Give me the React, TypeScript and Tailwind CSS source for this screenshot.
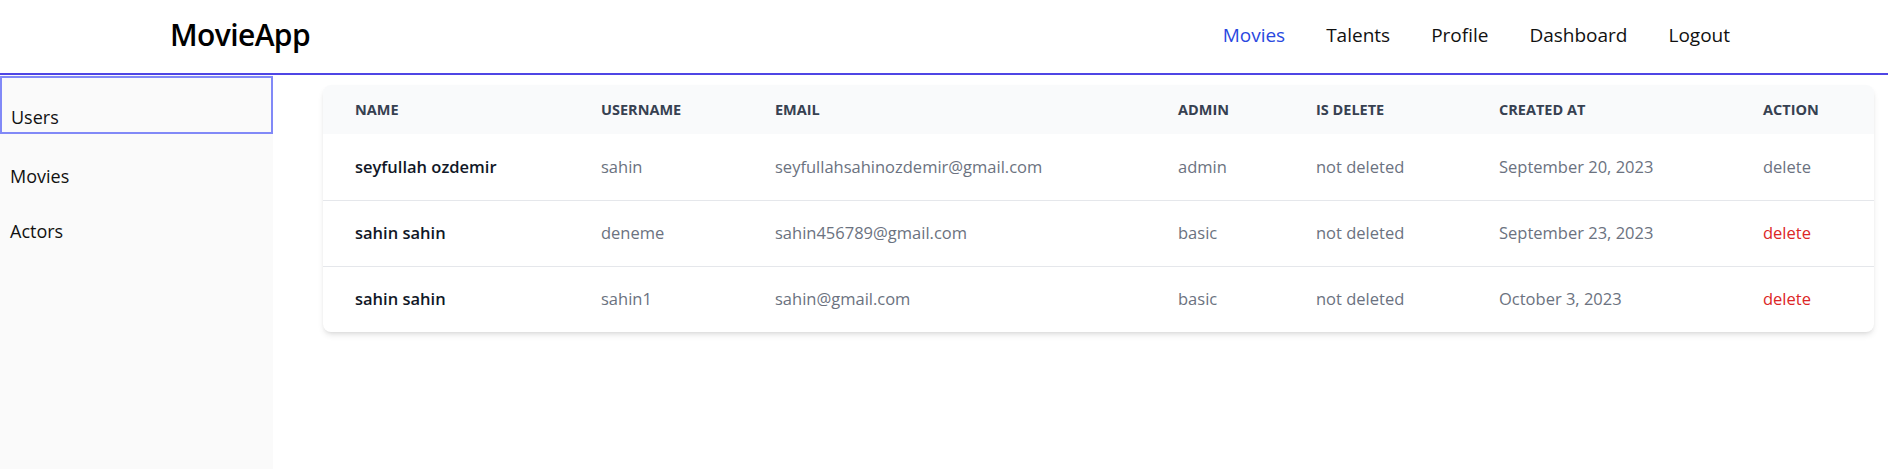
import React from "react";

const rows = [
  {
    name: "seyfullah ozdemir",
    username: "sahin",
    email: "seyfullahsahinozdemir@gmail.com",
    admin: "admin",
    deleted: "not deleted",
    created: "September 20, 2023",
    self: true,
  },
  {
    name: "sahin sahin",
    username: "deneme",
    email: "sahin456789@gmail.com",
    admin: "basic",
    deleted: "not deleted",
    created: "September 23, 2023",
    self: false,
  },
  {
    name: "sahin sahin",
    username: "sahin1",
    email: "sahin@gmail.com",
    admin: "basic",
    deleted: "not deleted",
    created: "October 3, 2023",
    self: false,
  },
];

const cols = "grid grid-cols-[246px_174px_403px_138px_183px_264px_1fr]";

export default function App() {
  return (
    <div
      className="min-h-[469px] bg-white text-black"
      style={{ fontFamily: '"Open Sans", "Noto Sans", sans-serif' }}
    >
      <header className="flex h-[75px] items-center justify-between border-b-2 border-[#4f46e5] pb-[3px] pl-[170px] pr-[158px]">
        <div className="text-[30px] font-semibold leading-none tracking-[-0.6px]">MovieApp</div>
        <nav className="flex items-center gap-[41px] text-[19px] font-medium leading-7">
          <a className="text-[#2948e0]">Movies</a>
          <a className="text-[#111111]">Talents</a>
          <a className="text-[#111111]">Profile</a>
          <a className="text-[#111111]">Dashboard</a>
          <a className="text-[#111111]">Logout</a>
        </nav>
      </header>
      <div className="flex min-h-[394px]">
        <aside className="w-[273px] shrink-0 bg-[#fafafa] text-lg leading-7 text-[#111111]">
          <div className="mt-px h-[58px] border-2 border-[#8189f7] pl-[9px] pt-[25px]">Users</div>
          <div className="mt-[14px] py-[14px] pl-[10px]">Movies</div>
          <div className="py-[13px] pl-[10px]">Actors</div>
        </aside>
        <main className="flex-1 pl-[50px] pr-[14px] pt-[10px]">
          <div className="overflow-hidden rounded-lg bg-white shadow-md">
            <div className={`${cols} h-[49px] items-center bg-[#f9fafb] text-[14.5px] font-bold uppercase text-[#374151]`}>
              <div className="pl-8">Name</div>
              <div className="pl-8">Username</div>
              <div className="pl-8">Email</div>
              <div className="pl-8">Admin</div>
              <div className="pl-8">Is Delete</div>
              <div className="pl-8">Created At</div>
              <div className="pl-8">Action</div>
            </div>
            {rows.map((r, i) => (
              <div
                key={i}
                className={`${cols} h-[66px] items-center text-[16.5px] text-[#6b7280] ${i > 0 ? "border-t border-[#e5e7eb]" : ""}`}
              >
                <div className="pl-8 font-semibold text-[#111827]">{r.name}</div>
                <div className="pl-8">{r.username}</div>
                <div className="pl-8">{r.email}</div>
                <div className="pl-8">{r.admin}</div>
                <div className="pl-8">{r.deleted}</div>
                <div className="pl-8">{r.created}</div>
                <div className={`pl-8 ${r.self ? "text-[#6b7280]" : "text-[#dc2626]"}`}>delete</div>
              </div>
            ))}
          </div>
        </main>
      </div>
    </div>
  );
}
